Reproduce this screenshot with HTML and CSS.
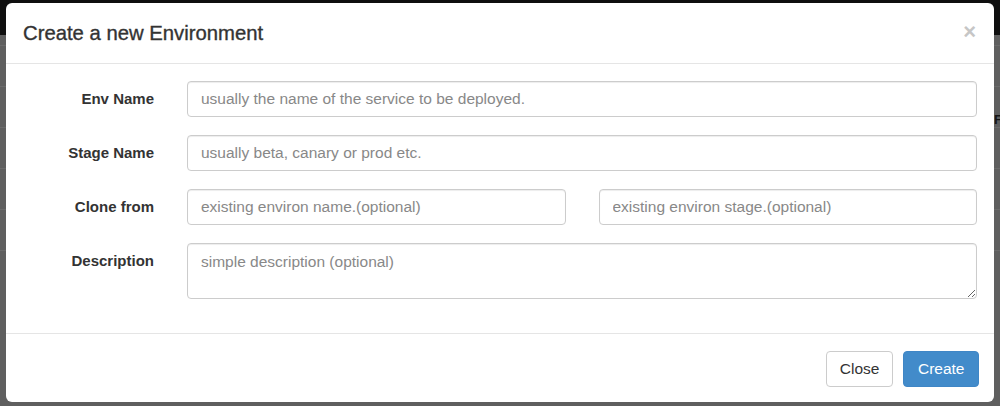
FILE: index.html
```html
<!DOCTYPE html>
<html>
<head>
<meta charset="utf-8">
<link rel="stylesheet" href="styles.css">
</head>
<body>
<div class="page">
  <div class="navbar"></div>
  <div class="rows">
    <div class="row-line"></div>
    <div class="row-line"></div>
    <div class="row-line"></div>
    <div class="row-line"></div>
    <div class="row-line"></div>
    <div class="row-line"></div>
  </div>
  <span class="peek">F</span>
</div>
<div class="modal">
  <div class="modal-header">
    <h4 class="modal-title">Create a new Environment</h4>
    <span class="close">&times;</span>
  </div>
  <form class="modal-body">
    <label class="control-label" for="env">Env Name</label>
    <input class="form-control" id="env" type="text" placeholder="usually the name of the service to be deployed.">
    <label class="control-label" for="stage">Stage Name</label>
    <input class="form-control" id="stage" type="text" placeholder="usually beta, canary or prod etc.">
    <label class="control-label" for="clone">Clone from</label>
    <div class="pair">
      <input class="form-control" id="clone" type="text" placeholder="existing environ name.(optional)">
      <input class="form-control" type="text" placeholder="existing environ stage.(optional)">
    </div>
    <label class="control-label" for="desc">Description</label>
    <textarea class="form-control textarea" id="desc" placeholder="simple description (optional)"></textarea>
  </form>
  <div class="modal-footer">
    <button class="btn btn-default" type="button">Close</button>
    <button class="btn btn-primary" type="button">Create</button>
  </div>
</div>
</body>
</html>
```

FILE: styles.css
```css
html, body {
  margin: 0;
  padding: 0;
}
body {
  width: 1000px;
  height: 406px;
  overflow: hidden;
  position: relative;
  background: #5f5f5f;
  font-family: "Liberation Sans", Arial, sans-serif;
  color: #333;
}
.page {
  height: 406px;
  display: flex;
  flex-direction: column;
}
.navbar {
  height: 35px;
  background: #0f0f0f;
  flex: none;
}
.rows {
  display: flex;
  flex-direction: column;
}
.row-line {
  height: 40px;
  border-bottom: 1px solid #6b6b6b;
}
.row-line:first-child {
  height: 10px;
}
.peek {
  position: absolute;
  left: 994px;
  top: 112px;
  width: 6px;
  overflow: hidden;
  font-weight: bold;
  font-size: 13px;
  color: #151515;
}
.modal {
  position: absolute;
  top: 3px;
  left: 6px;
  width: 988px;
  height: 399px;
  background: #fff;
  border-radius: 6px;
  display: flex;
  flex-direction: column;
  box-sizing: border-box;
}
.modal-header {
  display: flex;
  align-items: center;
  justify-content: space-between;
  height: 61px;
  box-sizing: border-box;
  padding: 0 18px 0 17px;
  border-bottom: 1px solid #e5e5e5;
  flex: none;
}
.modal-title {
  margin: 0;
  font-size: 20.3px;
  font-weight: normal;
  -webkit-text-stroke: 0.35px #333;
  color: #333;
}
.close {
  font-size: 22px;
  font-weight: bold;
  color: #c6c6c6;
  line-height: 1;
  margin-top: -2px;
}
.modal-body {
  margin: 0;
  display: grid;
  grid-template-columns: 148px 1fr;
  column-gap: 33px;
  row-gap: 18px;
  padding: 17px 17px 34px 0;
  border-bottom: 1px solid #e5e5e5;
  align-items: start;
}
.control-label {
  text-align: right;
  font-size: 15px;
  font-weight: bold;
  line-height: 36px;
  color: #333;
}
.pair {
  display: grid;
  grid-template-columns: 1fr 1fr;
  column-gap: 33px;
}
.form-control {
  display: block;
  width: 100%;
  height: 36px;
  box-sizing: border-box;
  padding: 7px 13px;
  font-family: "Liberation Sans", Arial, sans-serif;
  font-size: 15.5px;
  color: #555;
  background: #fff;
  border: 1px solid #ccc;
  border-radius: 4px;
  box-shadow: inset 0 1px 1px rgba(0,0,0,0.075);
  margin: 0;
}
.form-control::placeholder {
  color: #888;
}
.textarea {
  height: 56px;
  padding: 9px 13px;
  line-height: 18px;
  resize: vertical;
}
.modal-footer {
  display: flex;
  justify-content: flex-end;
  gap: 10px;
  padding: 17px 15px 0 0;
}
.btn {
  height: 36px;
  box-sizing: border-box;
  padding: 0 13px;
  font-family: "Liberation Sans", Arial, sans-serif;
  font-size: 15.5px;
  line-height: 34px;
  border-radius: 4px;
  border: 1px solid #ccc;
  background: #fff;
  color: #333;
}
.btn-primary {
  background: #428bca;
  border-color: #3f86c6;
  color: #fff;
  padding: 0 13.5px;
}
```
